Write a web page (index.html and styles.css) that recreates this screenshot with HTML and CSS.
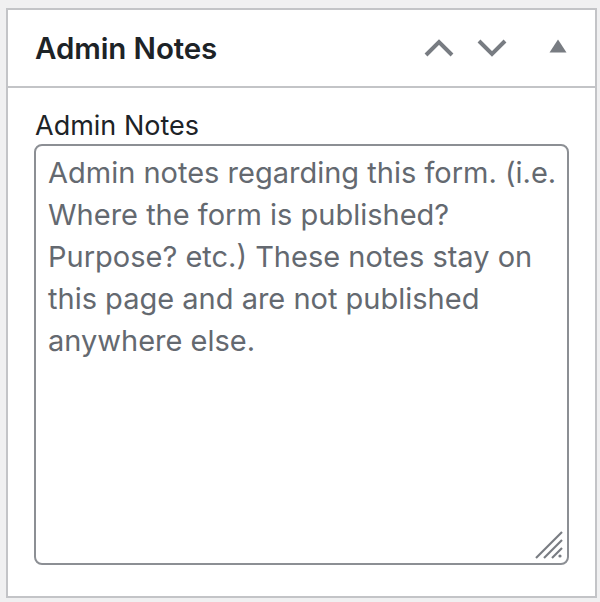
FILE: index.html
```html
<!DOCTYPE html>
<html>
<head>
<meta charset="utf-8">
<link rel="stylesheet" href="styles.css">
</head>
<body>
<div class="postbox">
  <div class="postbox-header">
    <h2 class="hndle">Admin Notes</h2>
    <div class="handle-actions">
      <svg class="icon chev" width="30" height="18" viewBox="0 0 30 18"><polyline points="2,16 15,3 28,16" fill="none" stroke="#787c82" stroke-width="4"/></svg>
      <svg class="icon chev" width="30" height="18" viewBox="0 0 30 18"><polyline points="2,2 15,15 28,2" fill="none" stroke="#787c82" stroke-width="4"/></svg>
      <svg class="icon tri" width="18" height="14" viewBox="0 0 18 14"><polygon points="0.5,13.5 9,0.5 17.5,13.5" fill="#787c82"/></svg>
    </div>
  </div>
  <div class="inside">
    <label class="field-label">Admin Notes</label>
    <div class="textarea">
      <div class="placeholder">Admin notes regarding this form. (i.e.<br>Where the form is published?<br>Purpose? etc.) These notes stay on<br>this page and are not published<br>anywhere else.</div>
      <svg class="grip" width="30" height="30" viewBox="0 0 30 30">
        <line x1="2" y1="28" x2="28" y2="2" stroke="#787c82" stroke-width="2.2"/>
        <line x1="10" y1="28" x2="28" y2="10" stroke="#787c82" stroke-width="2.2"/>
        <line x1="18" y1="28" x2="28" y2="18" stroke="#787c82" stroke-width="2.2"/>
        <circle cx="26" cy="26" r="1.6" fill="#787c82"/>
      </svg>
    </div>
  </div>
</div>
</body>
</html>
```

FILE: styles.css
```css
html, body {
  margin: 0;
  padding: 0;
  background: #f0f0f1;
}
body {
  padding-top: 8px;
  padding-left: 6px;
  font-family: Inter, "Noto Sans", sans-serif;
}
.postbox {
  width: 587px;
  height: 586px;
  background: #fff;
  border: 2px solid #c3c4c7;
  box-sizing: content-box;
}
.postbox-header {
  height: 76px;
  border-bottom: 2px solid #c3c4c7;
  display: flex;
  align-items: center;
  justify-content: space-between;
}
.hndle {
  margin: 0;
  padding-left: 27px;
  font-size: 29.5px;
  font-weight: 600;
  color: #1d2327;
  letter-spacing: -0.1px;
  line-height: 1;
  position: relative;
  top: 1px;
}
.handle-actions {
  display: flex;
  align-items: center;
  padding-right: 28px;
}
.icon { display: block; }
.chev { margin-right: 23px; }
.chev + .chev { margin-right: 42px; }
.tri { position: relative; top: -2px; }
.inside {
  padding: 22px 26px 0 26px;
}
.field-label {
  display: block;
  font-size: 27px;
  color: #1d2327;
  line-height: 32px;
  padding-left: 1px;
}
.textarea {
  position: relative;
  margin-top: 2px;
  width: 507px;
  height: 405px;
  border: 2px solid #8c8f94;
  border-radius: 8px;
  padding: 6px 12px;
  box-sizing: content-box;
}
.placeholder {
  font-size: 29px;
  line-height: 42px;
  color: #646970;
  letter-spacing: 0;
  white-space: nowrap;
}
.grip {
  position: absolute;
  right: 3px;
  bottom: 3px;
}
```
